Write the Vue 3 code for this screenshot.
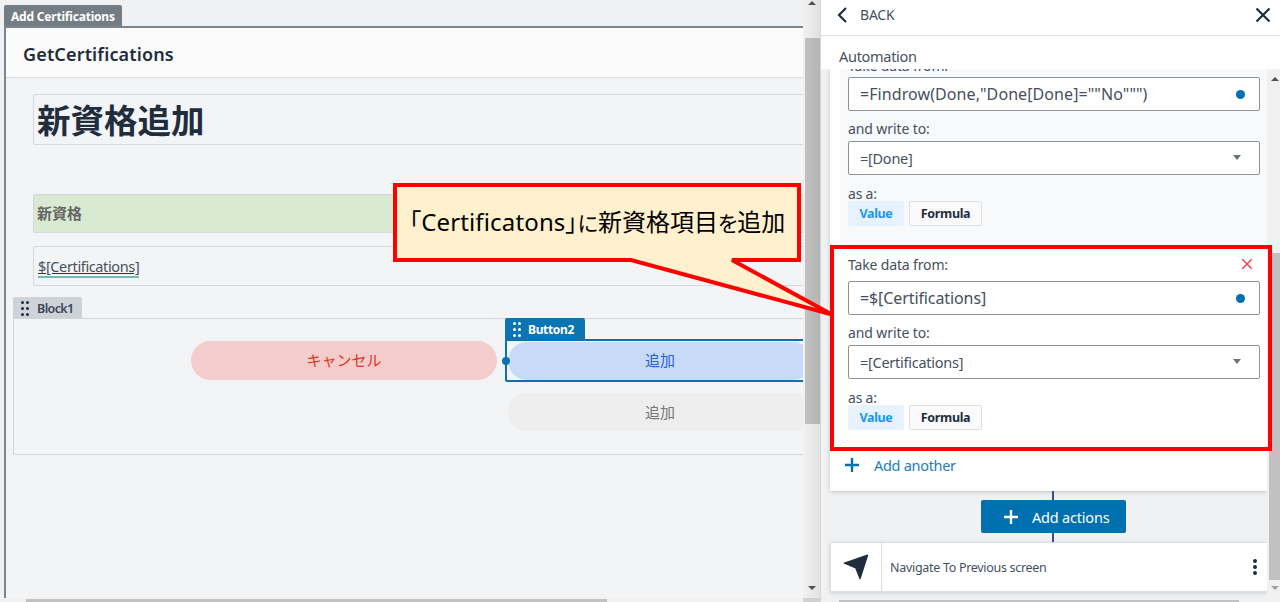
<script setup>
import {ref} from 'vue'

const dots=[0,1,2,3,4,5]

//each mapping: where data comes from and which column it is written to
const fields=ref([
  {from:'=Findrow(Done,"Done[Done]=""No""")',to:'=[Done]',type:'Value',old:true},
  {from:'=$[Certifications]',to:'=[Certifications]',type:'Value',old:false}
])
const types=['Value','Formula']
</script>

<template>
  <main class="app">
    <section class="canvas">
      <div class="screen-tab"><span class="t-tab">Add Certifications</span></div>
      <div class="screen">
        <div class="screen-head"><span class="t-head">GetCertifications</span></div>
        <div class="box title"><span>新資格追加</span></div>
        <div class="box green"><span>新資格</span></div>
        <div class="box variable"><span>$[Certifications]</span></div>
        <div class="block-tab">
          <span class="grip"><i v-for="d in dots" :key="d"></i></span>
          <span class="t-block">Block1</span>
        </div>
        <div class="block">
          <div class="pill cancel">キャンセル</div>
          <div class="right-col">
            <div class="selected">
              <div class="pill add">追加</div>
              <div class="button-tab">
                <span class="grip"><i v-for="d in dots" :key="d"></i></span>
                <span class="t-button">Button2</span>
              </div>
              <b class="handle"></b>
            </div>
            <div class="pill disabled">追加</div>
          </div>
        </div>
      </div>
      <div class="hbar"><div class="thumb"></div></div>
    </section>

    <div class="vbar">
      <i class="up"></i>
      <div class="thumb"></div>
      <i class="down"></i>
      <div class="corner"></div>
    </div>

    <aside class="panel">
      <header class="back">
        <svg width="12" height="18" viewBox="0 0 12 18"><path d="M10 2L3 9l7 7" fill="none" stroke="#1f2d3d" stroke-width="2.2"/></svg>
        <span class="t-back">BACK</span>
        <svg class="close" width="16" height="16" viewBox="0 0 16 16"><path d="M1.5 1.5l13 13M14.5 1.5l-13 13" stroke="#1f2d3d" stroke-width="2.2"/></svg>
      </header>
      <div class="automation"><span class="t-auto">Automation</span></div>
      <div class="scroll">
        <div class="flow">
          <div class="card">
            <div v-for="(f,index) in fields" :key="index" class="field" :class="{old:f.old}">
              <div class="label from">
                <span class="t-from">Take data from:</span>
                <svg v-if="!f.old" width="12" height="12" viewBox="0 0 12 12"><path d="M1.3 1.3l9.4 9.4M10.7 1.3l-9.4 9.4" stroke="#f8404a" stroke-width="1.5"/></svg>
              </div>
              <div class="input">
                <span :class="f.old?'t-findrow':'t-cert'">{{f.from}}</span>
                <b class="dot"></b>
              </div>
              <div class="label write"><span class="t-write">and write to:</span></div>
              <div class="input select">
                <span class="t-column">{{f.to}}</span>
                <i class="caret"></i>
              </div>
              <div class="label as"><span class="t-as">as a:</span></div>
              <div class="types">
                <button v-for="t in types" :key="t" :class="{active:t==f.type}"><span>{{t}}</span></button>
              </div>
            </div>
            <div class="another">
              <svg width="16" height="16" viewBox="0 0 16 16"><path d="M8 1v14M1 8h14" stroke="#0070b0" stroke-width="2.4"/></svg>
              <span class="t-another">Add another</span>
            </div>
          </div>
          <div class="line"></div>
          <button class="add-actions">
            <svg width="16" height="16" viewBox="0 0 16 16"><path d="M8 1v14M1 8h14" stroke="#fff" stroke-width="2.4"/></svg>
            <span class="t-actions">Add actions</span>
          </button>
          <div class="line"></div>
          <div class="action">
            <div class="icon">
              <svg width="26" height="26" viewBox="0 0 26 26"><path d="M1.5 9.2L24.5 1.2 17 24.5 12.9 13.9Z" fill="#1f2d3d" stroke="#1f2d3d" stroke-width="1.4" stroke-linejoin="round"/></svg>
            </div>
            <span class="t-nav">Navigate To Previous screen</span>
            <div class="more"><i></i><i></i><i></i></div>
          </div>
          <div class="hbar panel-bar"><div class="thumb"></div></div>
        </div>
        <div class="pbar">
          <i class="up"></i>
          <div class="thumb"></div>
          <i class="down"></i>
        </div>
      </div>
    </aside>

    <div class="highlight"></div>
    <div class="callout">
      <svg width="450" height="140" viewBox="390 180 450 140"><path d="M395 185H799V260H732L832 314.5 631 260H395Z" fill="#fff1ce" stroke="#f00" stroke-width="4"/></svg>
      <p><span class="lat">「Certificatons」</span><span class="kana">に</span>新資格項目<span class="kana">を</span>追加</p>
    </div>
  </main>
</template>

<style>
body{
  margin:0;
  overflow:hidden;
}
</style>

<style scoped>
*{
  box-sizing:border-box;
}
.app{
  position:relative;
  display:flex;
  width:1280px;
  height:602px;
  overflow:hidden;
  background:#f0f1f3;
  color:#46505c;
  font-family:'Noto Sans','Noto Sans CJK JP',sans-serif;
  white-space:nowrap;
}
.app svg{
  display:block;
  flex:none;
}
button{
  border:none;
  padding:0;
  font-family:inherit;
}

/* canvas */
.canvas{
  width:803px;
  height:602px;
  overflow:hidden;
  padding-top:5px;
  flex:none;
}
.screen-tab{
  width:118px;
  height:21px;
  margin-left:4px;
  padding-left:7px;
  border-radius:2px 2px 0 0;
  background:#747d84;
  color:#fff;
  font-size:12px;
  font-weight:700;
  line-height:23px;
}
.t-tab{
  letter-spacing:-0.2px;
}
.screen{
  height:572px;
  margin-left:4px;
  border-top:2px solid #7c848d;
  border-left:2px solid #7c848d;
  background:#f3f4f6;
}
.screen-head{
  height:50px;
  padding-left:17px;
  border-bottom:1px solid #d9dce3;
  background:#fbfbfb;
  color:#1f2d3d;
  font-size:18px;
  font-weight:600;
  line-height:52px;
}
.t-head{
  letter-spacing:0.15px;
}
.box{
  display:flex;
  align-items:center;
  width:790px;
  margin-left:27px;
  padding-left:3px;
  border:1px solid #d5d8df;
  border-radius:2px;
  font-family:'Noto Sans CJK JP',sans-serif;
}
.title{
  height:51px;
  margin-top:16px;
  padding-bottom:3px;
  color:#1f2d3d;
  font-size:33.5px;
  font-weight:700;
}
.green{
  height:39px;
  margin-top:49px;
  padding-bottom:2px;
  background:#d9ead3;
  color:#666;
  font-size:15px;
  font-weight:700;
}
.variable{
  height:40px;
  margin-top:13px;
  padding:2px 0 0 4px;
  font-family:'Noto Sans',sans-serif;
  font-size:14.5px;
}
.variable span{
  height:22px;
  line-height:20px;
  border-bottom:2px solid #6ebcb3;
  text-decoration:underline;
  text-decoration-color:#333;
  letter-spacing:-0.37px;
}
.block-tab{
  display:flex;
  align-items:center;
  width:69px;
  height:21px;
  margin:11px 0 0 7px;
  padding:2px 0 0 8px;
  border-radius:2px 2px 0 0;
  background:#ced3da;
  color:#394655;
  font-size:12.5px;
  font-weight:600;
}
.t-block{
  letter-spacing:-0.6px;
}
.grip{
  display:grid;
  grid-template-columns:3px 3px;
  gap:3px 2px;
  width:8px;
  margin-right:8px;
}
.grip i{
  width:3px;
  height:3px;
  border-radius:50%;
  background:#1f2d3d;
}
.block{
  display:flex;
  width:810px;
  height:137px;
  margin-left:7px;
  border:1px solid #cfd3da;
  border-radius:0 0 2px 2px;
}
.pill{
  width:306px;
  height:38px;
  flex:none;
  border-radius:20px;
  font-family:'Noto Sans CJK JP',sans-serif;
  font-size:15px;
  line-height:37px;
  text-align:center;
}
.cancel{
  height:39px;
  margin:22px 8px 0 177px;
  background:#f4cccc;
  color:#e03522;
}
.right-col{
  margin-top:20px;
}
.selected{
  position:relative;
  width:320px;
  height:43px;
  padding:1px;
  border:2px solid #0b71ae;
  border-radius:2px;
}
.add{
  width:304px;
  background:#c9daf8;
  color:#2a62d4;
  line-height:36px;
}
.button-tab{
  position:absolute;
  left:-2px;
  top:-23px;
  display:flex;
  align-items:center;
  width:80px;
  height:22px;
  padding-left:8px;
  border-radius:2px 2px 0 0;
  background:#0b75b3;
  color:#fff;
  font-size:12px;
  font-weight:700;
}
.t-button{
  letter-spacing:-0.35px;
}
.button-tab .grip{
  margin-right:7px;
}
.button-tab .grip i{
  background:#fff;
}
.handle{
  position:absolute;
  left:-5px;
  top:16px;
  width:8px;
  height:8px;
  border-radius:50%;
  background:#0b71ae;
}
.disabled{
  width:304px;
  margin:11px 0 0 3px;
  background:#eee;
  color:#777;
}
.hbar{
  height:4px;
  padding:1px 0 0 26px;
  background:#f1f1f1;
}
.hbar .thumb{
  width:581px;
  height:3px;
  background:#c1c1c1;
}

/* scrollbar between the canvas and the panel */
.vbar{
  display:flex;
  flex-direction:column;
  align-items:center;
  width:18px;
  flex:none;
  background:linear-gradient(90deg,#f1f1f1,#e2e2e2 92%,#cfd2d6);
}
.up,
.down{
  border:4px solid transparent;
}
.up{
  border-top:0;
  border-bottom-color:#505050;
}
.down{
  border-bottom:0;
  border-top-color:#505050;
}
.vbar .up{
  margin-top:1px;
}
.vbar .thumb{
  width:15px;
  height:386px;
  flex:none;
  margin:33px 0 162px;
  background:linear-gradient(90deg,#c1c1c1,#b4b4b4);
}
.corner{
  width:18px;
  height:4px;
  margin-top:8px;
  background:#d0d0d0;
}

/* automation panel */
.panel{
  width:459px;
  height:602px;
  flex:none;
  background:#fff;
}
.back{
  display:flex;
  align-items:center;
  height:36px;
  padding:0 9px 6px 15px;
  border-bottom:1px solid #dcdfe6;
  font-size:14px;
}
.t-back{
  margin-left:12px;
  letter-spacing:-0.2px;
}
.close{
  margin-left:auto;
}
.automation{
  height:33px;
  padding-left:18px;
  font-size:14.5px;
  line-height:41px;
}
.t-auto{
  letter-spacing:-0.3px;
}
.scroll{
  display:flex;
  height:533px;
  overflow:hidden;
  background:#f0f1f3;
}
.flow{
  display:flex;
  flex-direction:column;
  align-items:center;
  width:446px;
  flex:none;
  padding-left:9px;
  overflow:hidden;
}
.card{
  width:437px;
  height:422px;
  flex:none;
  background:#fff;
  box-shadow:0 1px 4px rgba(0,0,0,.2);
}
.field{
  height:204px;
  margin-left:10px;
  padding:0 7px 0 8px;
  overflow:hidden;
}
.field.old{
  height:177px;
  background:#f8f9fb;
}
.label{
  display:flex;
  align-items:center;
  justify-content:space-between;
  font-size:14px;
}
.t-from{
  letter-spacing:-0.15px;
}
.t-write{
  letter-spacing:-0.1px;
}
.t-as{
  letter-spacing:-0.2px;
}
.from{
  height:35px;
  padding:1px 7px 0 0;
}
.old .from{
  height:8px;
  padding-bottom:2px;
  align-items:flex-end;
  line-height:19px;
}
.input{
  display:flex;
  align-items:center;
  justify-content:space-between;
  width:412px;
  height:34px;
  padding:0 14px 0 11px;
  border:1px solid #8d929b;
  border-radius:2px;
  background:#fff;
  font-size:16px;
}
.t-findrow{
  letter-spacing:0.08px;
}
.t-cert{
  letter-spacing:-0.1px;
}
.select{
  padding:0 18px 1px 11px;
  font-size:14.5px;
}
.t-column{
  letter-spacing:-0.26px;
}
.dot{
  width:9px;
  height:9px;
  border-radius:50%;
  background:#0070b0;
}
.caret{
  border:4px solid transparent;
  border-top:5px solid #69727c;
  border-bottom:0;
}
.write{
  height:30px;
  padding-top:5px;
}
.as{
  height:26px;
  padding-top:10px;
}
.types{
  display:flex;
  gap:5px;
}
.types button{
  width:73px;
  height:25px;
  border:1px solid #dcdfe3;
  border-radius:2px;
  background:#fafafa;
  color:#1f2d3d;
  font-size:12.5px;
  font-weight:700;
  letter-spacing:-0.35px;
}
.types button.active{
  width:56px;
  border-color:#e6f3ff;
  background:#e6f3ff;
  color:#1b96e8;
}
.another{
  display:flex;
  align-items:center;
  height:30px;
  padding-left:14px;
  color:#2080b8;
  font-size:14.5px;
}
.t-another{
  margin-left:14px;
  letter-spacing:-0.3px;
}
.line{
  width:2px;
  height:9px;
  flex:none;
  margin-left:9px;
  background:#3b4b9b;
}
.add-actions{
  display:flex;
  align-items:center;
  width:145px;
  height:33px;
  flex:none;
  margin-left:10px;
  padding-left:22px;
  border-radius:2px;
  background:#0070b0;
  color:#fff;
  font-size:14.5px;
}
.t-actions{
  margin-left:13px;
  letter-spacing:-0.2px;
}
.action{
  display:flex;
  align-items:center;
  width:437px;
  height:50px;
  flex:none;
  background:#fff;
  border:1px solid #dcdfe2;
  border-right:0;
  box-shadow:0 1px 4px rgba(0,0,0,.15);
  font-size:12.5px;
}
.t-nav{
  letter-spacing:-0.3px;
}
.icon{
  display:flex;
  align-items:center;
  justify-content:center;
  width:51px;
  height:48px;
  margin-right:8px;
  border-right:1px solid #dcdfe2;
}
.more{
  display:flex;
  flex-direction:column;
  gap:2px;
  margin-left:auto;
  padding-right:10px;
}
.more i{
  width:4px;
  height:4px;
  border-radius:50%;
  background:#1f2d3d;
}
.panel-bar{
  align-self:stretch;
  flex:none;
  margin-top:7px;
  padding-left:9px;
}
.panel-bar .thumb{
  width:400px;
}
.pbar{
  display:flex;
  flex-direction:column;
  align-items:center;
  width:13px;
  padding-left:2px;
  background:#f1f1f1;
}
.pbar .up{
  margin-top:8px;
}
.pbar .thumb{
  width:12px;
  height:327px;
  margin:172px 0 6px;
  background:#c1c1c1;
}
.pbar .down{
  border-top-color:#a0a0a0;
}

/* annotation over the page */
.highlight{
  position:absolute;
  left:830px;
  top:245px;
  width:442px;
  height:206px;
  border:4px solid #f00;
}
.callout{
  position:absolute;
  left:390px;
  top:180px;
}
.callout p{
  position:absolute;
  left:19px;
  top:25px;
  margin:0;
  color:#000;
  font-family:'Noto Sans','Noto Sans CJK JP',sans-serif;
  font-size:24px;
  font-weight:400;
  line-height:34px;
  font-feature-settings:'palt';
}
.lat{
  letter-spacing:0.15px;
}
.kana{
  font-size:21px;
}
</style>
